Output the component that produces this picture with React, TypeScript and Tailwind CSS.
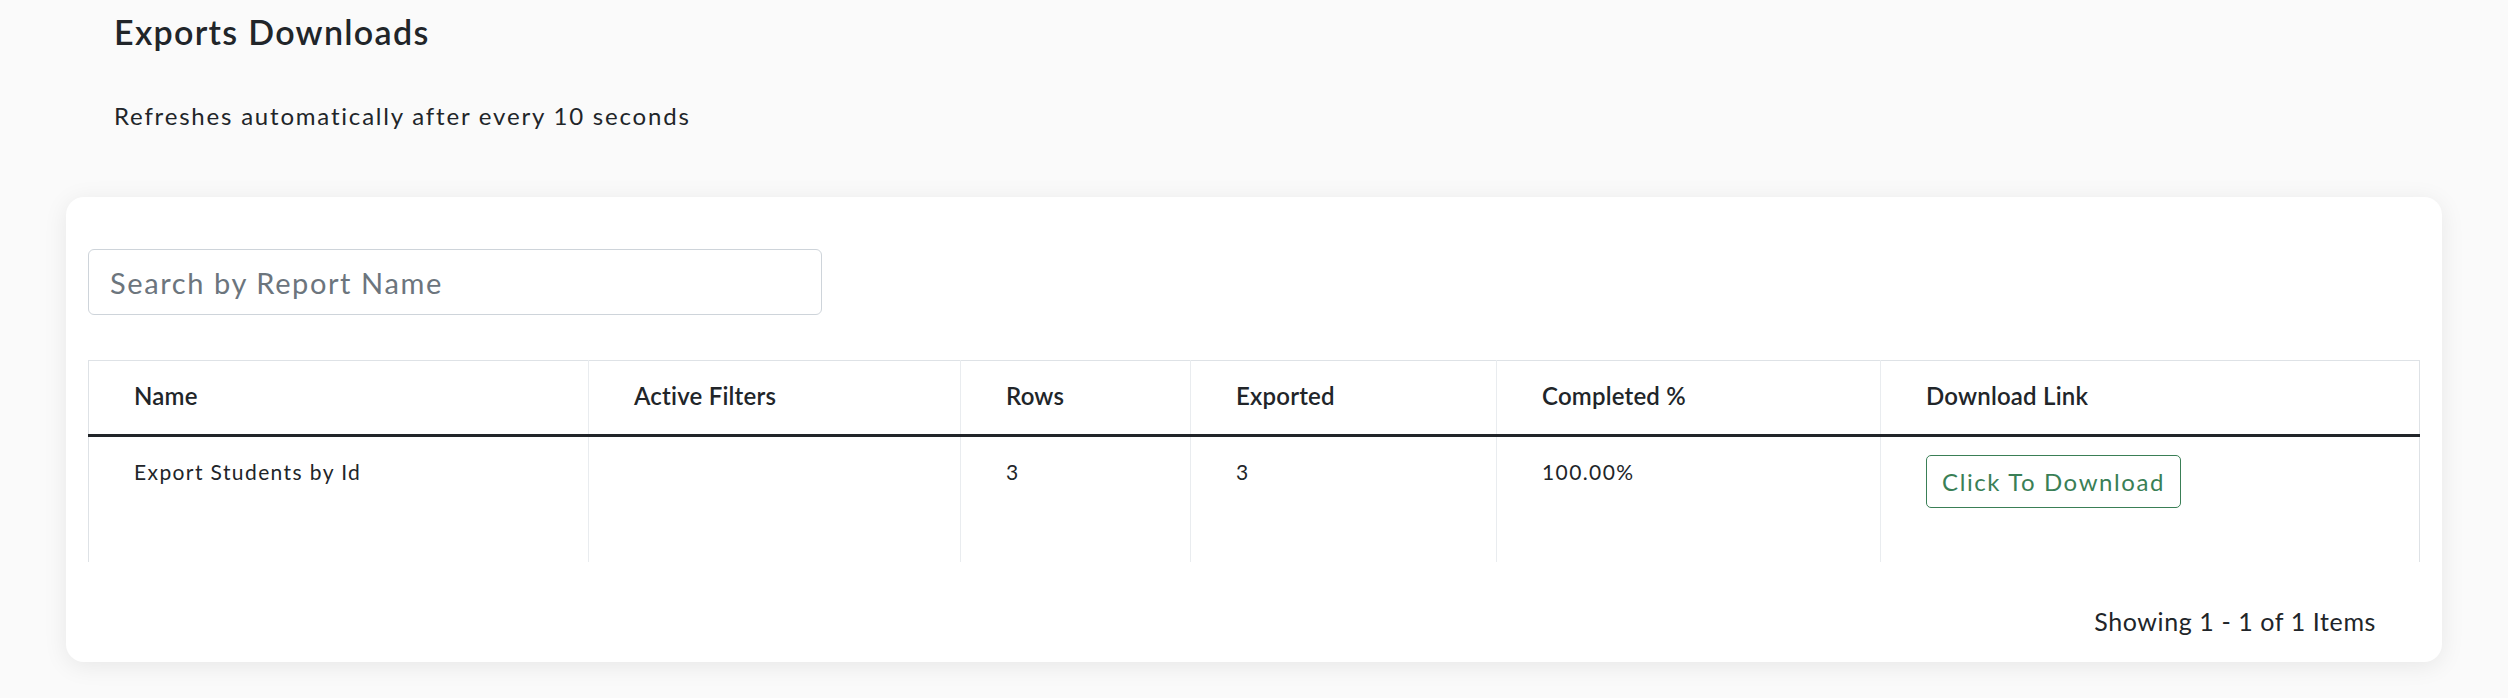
import React from "react";

const cols = [
  { label: "Name", w: "w-[500px]" },
  { label: "Active Filters", w: "w-[372px]" },
  { label: "Rows", w: "w-[230px]" },
  { label: "Exported", w: "w-[306px]" },
  { label: "Completed %", w: "w-[384px]" },
  { label: "Download Link", w: "w-[539px]" },
];

export default function App() {
  return (
    <div className="min-h-screen w-full bg-[#fafafa] text-[#212529] font-['Lato',_'Liberation_Sans',_sans-serif] pt-[11px]">
      <div className="pl-[114px]">
        <h1 className="text-[34px] leading-[41px] font-semibold tracking-[1.3px]">Exports Downloads</h1>
        <p className="mt-[49px] text-[24px] leading-[29px] tracking-[1.8px]">Refreshes automatically after every 10 seconds</p>
      </div>
      <div className="ml-[66px] mt-[67px] w-[2376px] rounded-[18px] bg-white px-[22px] pt-[52px] pb-[26px] shadow-[0_4px_24px_rgba(0,0,0,0.08)]">
        <input
          type="text"
          placeholder="Search by Report Name"
          className="block h-[66px] w-[734px] rounded-[6px] border border-[#ced4da] bg-white px-[21px] text-[29px] tracking-[1.6px] text-[#212529] placeholder:text-[#6c757d] outline-none"
        />
        <table className="mt-[45px] w-[2331px] table-fixed border-collapse">
          <thead>
            <tr className="h-[75px] border-t border-[#dee2e6]">
              {cols.map((c, i) => (
                <th
                  key={c.label}
                  className={`${c.w} border-b-[3px] border-b-[#212529] ${i === 0 ? "border-l border-l-[#dee2e6]" : "border-l border-l-[#e9ecef]"} ${i === cols.length - 1 ? "border-r border-r-[#dee2e6]" : ""} pl-[45px] pb-[3px] text-left align-middle text-[24px] font-semibold tracking-[0.2px]`}
                >
                  {c.label}
                </th>
              ))}
            </tr>
          </thead>
          <tbody>
            <tr className="h-[126px]">
              {["Export Students by Id", "", "3", "3", "100.00%"].map((v, i) => (
                <td
                  key={i}
                  className={`border-l ${i === 0 ? "border-l-[#dee2e6]" : "border-l-[#e9ecef]"} pl-[45px] pt-[22px] align-top text-[21px] leading-[26px] tracking-[1.4px]`}
                >
                  {v}
                </td>
              ))}
              <td className="border-l border-r border-l-[#e9ecef] border-r-[#dee2e6] pl-[45px] pt-[18px] align-top">
                <button className="h-[53px] rounded-[5px] border border-[#3a7f56] px-[15px] text-[24px] tracking-[1.6px] text-[#3a7f56] bg-white">
                  Click To Download
                </button>
              </td>
            </tr>
          </tbody>
        </table>
        <div className="mt-[44px] flex justify-end pr-[44px]">
          <span className="text-[25px] leading-[30px] tracking-[0.6px]">Showing 1 - 1 of 1 Items</span>
        </div>
      </div>
    </div>
  );
}
